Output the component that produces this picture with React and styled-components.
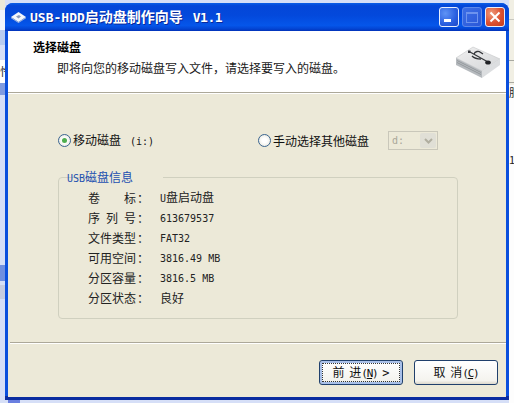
import React from "react";
import styled, { createGlobalStyle } from "styled-components";

const GlobalStyles = createGlobalStyle`
  html, body {
    margin: 0;
    padding: 0;
    background: #d6dff7;
    overflow: hidden;
  }
`;

const FONT = `"Noto Sans CJK SC", "Liberation Sans", sans-serif`;
const MONO = `"DejaVu Sans Mono", "Noto Sans CJK SC", monospace`;

const Desktop = styled.div`
  position: relative;
  width: 514px;
  height: 403px;
  overflow: hidden;
  background: #d6dff7;
  font-family: ${FONT};
  font-size: 12px;
  line-height: 14px;
  color: #111;
`;

// bits of the windows lying behind the dialog
const Scrap = styled.div`
  position: absolute;
  left: ${(p) => p.$x}px;
  top: ${(p) => p.$y}px;
  width: ${(p) => p.$w}px;
  height: ${(p) => p.$h}px;
  background: ${(p) => p.$bg};
  color: #222;
  font-size: 11px;
  line-height: ${(p) => p.$h}px;
  overflow: hidden;
  border-radius: ${(p) => p.$round || 0}px;
`;

const Dialog = styled.div`
  position: absolute;
  left: 5px;
  top: 3px;
  width: 504px;
  height: 397px;
  display: flex;
  flex-direction: column;
  border-radius: 8px 8px 0 0;
  overflow: hidden;
  background: linear-gradient(180deg, #0a4fdd 99%, #0a2ca0 99%);
`;

const TitleBar = styled.div`
  height: 28px;
  flex: none;
  display: flex;
  align-items: center;
  padding: 0 4px 0 6px;
  background: linear-gradient(
    180deg,
    #0a5fe8 0,
    #0446d8 10%,
    #0349dc 45%,
    #0556ea 80%,
    #0345d4 92%,
    #0232b8 100%
  );
`;

const TitleText = styled.div`
  margin-left: 4px;
  flex: 1;
  color: #fff;
  font-weight: 700;
  font-size: 14px;
  white-space: pre;
  text-shadow: 1px 1px 0 #0a2a9c;
`;

const Lat = styled.span`
  font-family: ${MONO};
  font-size: ${(p) => p.$size || 10}px;
  font-weight: inherit;
  margin-left: ${(p) => p.$gap || 0}px;
  letter-spacing: ${(p) => p.$track || 0}px;
`;

const Controls = styled.div`
  display: flex;
  gap: 3px;
`;

const WinButton = styled.div`
  width: 20px;
  height: 20px;
  box-sizing: border-box;
  border-radius: 3px;
  border: 1px solid ${(p) => (p.$off ? "#5c88ea" : "#e8eefc")};
  display: flex;
  align-items: center;
  justify-content: center;
  background: ${(p) =>
    p.$close
      ? "radial-gradient(circle at 30% 30%, #ef9a7a, #dc5030 55%, #c23c1c)"
      : p.$off
      ? "linear-gradient(135deg, #3c6ee6, #2a58d8)"
      : "radial-gradient(circle at 30% 30%, #5f93f5, #2a5fe0 60%, #1c47c8)"};
`;

const Client = styled.div`
  flex: 1;
  min-height: 0;
  margin: 0 3px 3px;
  display: flex;
  flex-direction: column;
  background: #ece9d8;
`;

const Header = styled.div`
  height: 61px;
  flex: none;
  box-sizing: border-box;
  background: #fff;
  display: flex;
  justify-content: space-between;
  padding: 9px 5px 0 25px;
`;

const HeaderTitle = styled.div`
  font-weight: 700;
  color: #000;
`;

const HeaderText = styled.div`
  margin: 7px 0 0 24px;
  color: #1a1a1a;
`;

const IconSlot = styled.div`
  margin-top: 5px;
  height: 36px;
`;

const Rule = styled.div`
  height: 2px;
  flex: none;
  margin: ${(p) => p.$inset || 0};
  background: #aca899;
  border-bottom: 1px solid #fff;
  box-sizing: border-box;
`;

const Main = styled.div`
  flex: 1;
  min-height: 0;
  display: flex;
  flex-direction: column;
  padding: 37px 48px 0 50px;
`;

const Options = styled.div`
  display: flex;
  align-items: center;
  height: 19px;
`;

const RadioLabel = styled.label`
  display: flex;
  align-items: center;
  gap: 2px;
  width: ${(p) => p.$w}px;
  flex: none;
`;

const RadioDot = styled.span`
  width: 13px;
  height: 13px;
  box-sizing: border-box;
  border-radius: 50%;
  border: 1px solid #3a6590;
  background: radial-gradient(circle, #fff 30%, #e4e2d6 100%);
  display: flex;
  align-items: center;
  justify-content: center;
  flex: none;
  &::after {
    content: "";
    width: 5px;
    height: 5px;
    border-radius: 50%;
    background: ${(p) => (p.$on ? "#4fae4f" : "transparent")};
  }
`;

const Combo = styled.div`
  width: 50px;
  height: 19px;
  margin-left: 19px;
  box-sizing: border-box;
  border: 1px solid #c9c7ba;
  background: #ece9d8;
  display: flex;
  align-items: center;
  justify-content: space-between;
  padding: 1px 1px 1px 3px;
  color: #a9a798;
`;

const ComboArrow = styled.div`
  width: 16px;
  height: 15px;
  border-radius: 2px;
  background: #e0dfd6;
  display: flex;
  align-items: center;
  justify-content: center;
`;

const Group = styled.fieldset`
  margin: 20px 0 0;
  padding: 3px 0 0 29px;
  height: 149px;
  box-sizing: border-box;
  border: 1px solid #d0d0bf;
  border-radius: 4px;
  min-inline-size: 0;
`;

const Legend = styled.legend`
  margin-left: 7px;
  padding: 0 1px;
  color: #1c50b0;
  line-height: 13px;
  transform: translateX(-29px);
`;

const InfoRow = styled.div`
  display: flex;
  align-items: center;
  height: 20px;
`;

const InfoLabel = styled.div`
  width: 72px;
  flex: none;
  display: flex;
  color: #222;
`;

const InfoChars = styled.div`
  width: 48px;
  margin-right: 1px;
  display: flex;
  justify-content: space-between;
`;

const InfoValue = styled.div`
  color: #222;
  white-space: pre;
`;

const Footer = styled.div`
  height: 53px;
  flex: none;
  box-sizing: border-box;
  display: flex;
  justify-content: flex-end;
  gap: 11px;
  padding: 16px 8px 0 0;
`;

const Button = styled.button`
  width: 84px;
  height: 25px;
  box-sizing: border-box;
  border: 1px solid #20406c;
  border-radius: 3px;
  background: linear-gradient(180deg, #fff, #f4f3ee 85%, #dcd8cc);
  font-family: ${FONT};
  font-size: 12px;
  line-height: 14px;
  word-spacing: 2px;
  color: #111;
  padding: 0;
  white-space: pre;
  box-shadow: ${(p) => (p.$focus ? "inset 0 0 0 2px #a9c0e8" : "none")};
  outline: ${(p) => (p.$focus ? "1px dotted #333" : "none")};
  outline-offset: -4px;
`;

const AccessKey = styled.u`
  text-underline-offset: 1px;
`;

function DiskTitleIcon() {
  return (
    <svg width="15" height="11" viewBox="0 0 15 11">
      <polygon points="7.5,0 15,5 7.5,10 0,5" fill="#f4f6fb" />
      <polygon points="0,5 7.5,10 15,5 15,6.2 7.5,11 0,6.2" fill="#9fb4dd" />
      <path d="M5 4.5 L8 3 L10 4.5 L7.5 6.5 Z" fill="#8c9bb8" />
    </svg>
  );
}

function MinimizeGlyph() {
  return (
    <svg width="12" height="12" viewBox="0 0 12 12">
      <rect x="1" y="8" width="7" height="3" fill="#fff" />
    </svg>
  );
}

function MaximizeGlyph() {
  return (
    <svg width="14" height="14" viewBox="0 0 14 14">
      <rect x="1.5" y="2.5" width="11" height="10" fill="none" stroke="#6d93ee" />
      <rect x="1" y="2" width="12" height="2" fill="#6d93ee" />
    </svg>
  );
}

function CloseGlyph() {
  return (
    <svg width="12" height="12" viewBox="0 0 12 12">
      <path d="M1.5 1.5 L10.5 10.5 M10.5 1.5 L1.5 10.5" stroke="#fff" strokeWidth="2" />
    </svg>
  );
}

function UsbDriveIcon() {
  return (
    <svg width="46" height="36" viewBox="0 0 46 36">
      <defs>
        <linearGradient id="usbTop" x1="0" y1="0" x2="1" y2="1">
          <stop offset="0" stopColor="#f0f0f0" />
          <stop offset="1" stopColor="#d4d6d8" />
        </linearGradient>
      </defs>
      <polygon points="1,13 18,2 45,14 27,26" fill="url(#usbTop)" stroke="#c4c6c8" strokeWidth="0.6" />
      <polygon points="1,13 27,26 27,33 1,20" fill="#b6babe" />
      <polygon points="27,26 45,14 45,20 27,33" fill="#dcdee0" />
      <path d="M2 15.5 L26 27.5 M2 17.5 L26 29.5" stroke="#8c9094" strokeWidth="0.8" />
      <g stroke="#35373b" strokeWidth="1.3" fill="none">
        <path d="M15 7 L33 17" />
        <path d="M19 9 C 20 6, 24 6, 25 7 L 28 9" />
        <path d="M17 11 C 19 13, 23 14, 26 14" />
      </g>
      <ellipse cx="33" cy="17.5" rx="2.8" ry="2" fill="#202226" />
      <rect x="13" y="5.5" width="2.5" height="2.5" fill="#35373b" />
    </svg>
  );
}

const rows = [
  [["卷", "标"], "U盘启动盘", false],
  [["序", "列", "号"], "613679537", true],
  [["文", "件", "类", "型"], "FAT32", true],
  [["可", "用", "空", "间"], "3816.49 MB", true],
  [["分", "区", "容", "量"], "3816.5 MB", true],
  [["分", "区", "状", "态"], "良好", false],
];

export default function App() {
  return (
    <Desktop>
      <GlobalStyles />
      <Scrap $x={0} $y={0} $w={5} $h={10} $bg="#ece9d8" />
      <Scrap $x={0} $y={10} $w={5} $h={20} $bg="#f1f4fc" />
      <Scrap $x={0} $y={30} $w={5} $h={15} $bg="#b8ccf0" />
      <Scrap $x={0} $y={60} $w={5} $h={23} $bg="#ffffff">忤</Scrap>
      <Scrap $x={0} $y={83} $w={5} $h={12} $bg="#7f9be0" />
      <Scrap $x={0} $y={265} $w={5} $h={16} $bg="#6f8fe0" />
      <Scrap $x={0} $y={285} $w={5} $h={14} $bg="#c6cce0" />
      <Scrap $x={8} $y={400} $w={12} $h={3} $bg="#6a7fe0" />
      <Scrap $x={509} $y={0} $w={5} $h={85} $bg="#f1efe4" />
      <Scrap $x={509} $y={19} $w={5} $h={1} $bg="#c8c8c0" />
      <Scrap $x={509} $y={60} $w={5} $h={1} $bg="#a8a8a0" />
      <Scrap $x={509} $y={82} $w={5} $h={1} $bg="#a8a8a0" />
      <Scrap $x={509} $y={85} $w={5} $h={318} $bg="#fdfdfd" />
      <Scrap $x={509} $y={85} $w={5} $h={14} $bg="#fdfdfd">服</Scrap>
      <Scrap $x={509} $y={152} $w={5} $h={14} $bg="#fdfdfd">1</Scrap>

      <Dialog>
        <TitleBar>
          <DiskTitleIcon />
          <TitleText>
            <Lat $size={13}>USB-HDD</Lat>启动盘制作向导<Lat $size={13} $gap={10} $track={-0.5}>V1.1</Lat>
          </TitleText>
          <Controls>
            <WinButton>
              <MinimizeGlyph />
            </WinButton>
            <WinButton $off>
              <MaximizeGlyph />
            </WinButton>
            <WinButton $close>
              <CloseGlyph />
            </WinButton>
          </Controls>
        </TitleBar>
        <Client>
          <Header>
            <div>
              <HeaderTitle>选择磁盘</HeaderTitle>
              <HeaderText>即将向您的移动磁盘写入文件，请选择要写入的磁盘。</HeaderText>
            </div>
            <IconSlot>
              <UsbDriveIcon />
            </IconSlot>
          </Header>
          <Rule />
          <Main>
            <Options>
              <RadioLabel $w={200}>
                <RadioDot $on />
                <span>
                  移动磁盘<Lat $gap={9}>(i:)</Lat>
                </span>
              </RadioLabel>
              <RadioLabel $w={111}>
                <RadioDot />
                <span>手动选择其他磁盘</span>
              </RadioLabel>
              <Combo>
                <Lat>d:</Lat>
                <ComboArrow>
                  <svg width="9" height="6" viewBox="0 0 9 6">
                    <path d="M1 1 L4.5 4.5 L8 1" fill="none" stroke="#b0aea0" strokeWidth="2" />
                  </svg>
                </ComboArrow>
              </Combo>
            </Options>
            <Group>
              <Legend>
                <Lat>USB</Lat>磁盘信息
              </Legend>
              {rows.map(([chars, value, latin]) => (
                <InfoRow key={chars.join("")}>
                  <InfoLabel>
                    <InfoChars>
                      {chars.map((c, i) => (
                        <span key={i}>{c}</span>
                      ))}
                    </InfoChars>
                    <span>：</span>
                  </InfoLabel>
                  <InfoValue>
                    {latin ? (
                      <Lat>{value}</Lat>
                    ) : value.startsWith("U") ? (
                      <>
                        <Lat>U</Lat>盘启动盘
                      </>
                    ) : (
                      value
                    )}
                  </InfoValue>
                </InfoRow>
              ))}
            </Group>
          </Main>
          <Rule $inset="0 0 0 2px" />
          <Footer>
            <Button $focus>
              前 进<Lat $size={11} $track={-1.2}>(<AccessKey>N</AccessKey>)</Lat> <Lat $size={12}>&gt;</Lat>
            </Button>
            <Button>
              取 消<Lat $size={11} $track={-1.2}>(<AccessKey>C</AccessKey>)</Lat>
            </Button>
          </Footer>
        </Client>
      </Dialog>
    </Desktop>
  );
}
